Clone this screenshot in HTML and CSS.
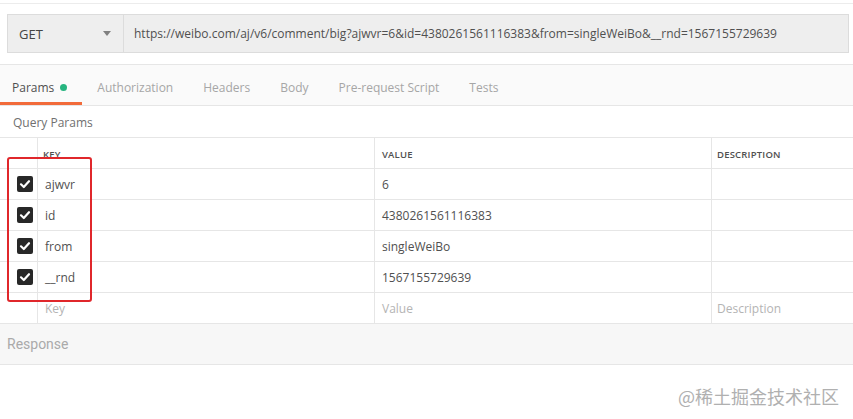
FILE: index.html
```html
<!DOCTYPE html>
<html>
<head>
<meta charset="utf-8">
<link rel="stylesheet" href="styles.css">
</head>
<body>
<div class="topline"></div>
<div class="request">
  <div class="urlbar">
    <div class="method"><span>GET</span><span class="caret"></span></div>
    <div class="url">https://weibo.com/aj/v6/comment/big?ajwvr=6&amp;id=4380261561116383&amp;from=singleWeiBo&amp;__rnd=1567155729639</div>
  </div>
</div>
<div class="tabs">
  <div class="tab active">Params<span class="dot"></span></div>
  <div class="tab">Authorization</div>
  <div class="tab">Headers</div>
  <div class="tab">Body</div>
  <div class="tab">Pre-request Script</div>
  <div class="tab">Tests</div>
</div>
<div class="section-title">Query Params</div>
<div class="table">
  <div class="row head">
    <div class="cell chk"></div>
    <div class="cell key">KEY</div>
    <div class="cell val">VALUE</div>
    <div class="cell desc">DESCRIPTION</div>
  </div>
  <div class="row">
    <div class="cell chk"><span class="box"><svg width="16" height="16" viewBox="0 0 16 16"><path d="M4 8.3 L6.8 11 L12 5.2" fill="none" stroke="#fff" stroke-width="2.2" stroke-linecap="round" stroke-linejoin="round"/></svg></span></div>
    <div class="cell key">ajwvr</div>
    <div class="cell val">6</div>
    <div class="cell desc"></div>
  </div>
  <div class="row">
    <div class="cell chk"><span class="box"><svg width="16" height="16" viewBox="0 0 16 16"><path d="M4 8.3 L6.8 11 L12 5.2" fill="none" stroke="#fff" stroke-width="2.2" stroke-linecap="round" stroke-linejoin="round"/></svg></span></div>
    <div class="cell key">id</div>
    <div class="cell val">4380261561116383</div>
    <div class="cell desc"></div>
  </div>
  <div class="row">
    <div class="cell chk"><span class="box"><svg width="16" height="16" viewBox="0 0 16 16"><path d="M4 8.3 L6.8 11 L12 5.2" fill="none" stroke="#fff" stroke-width="2.2" stroke-linecap="round" stroke-linejoin="round"/></svg></span></div>
    <div class="cell key">from</div>
    <div class="cell val">singleWeiBo</div>
    <div class="cell desc"></div>
  </div>
  <div class="row">
    <div class="cell chk"><span class="box"><svg width="16" height="16" viewBox="0 0 16 16"><path d="M4 8.3 L6.8 11 L12 5.2" fill="none" stroke="#fff" stroke-width="2.2" stroke-linecap="round" stroke-linejoin="round"/></svg></span></div>
    <div class="cell key">__rnd</div>
    <div class="cell val">1567155729639</div>
    <div class="cell desc"></div>
  </div>
  <div class="row">
    <div class="cell chk"></div>
    <div class="cell key ph">Key</div>
    <div class="cell val ph">Value</div>
    <div class="cell desc ph">Description</div>
  </div>
  <div class="highlight"></div>
</div>
<div class="response">Response</div>
<div class="watermark">@稀土掘金技术社区</div>
</body>
</html>
```
FILE: styles.css
```css
html, body {
  margin: 0;
  padding: 0;
  background: #fff;
}
body {
  width: 853px;
  height: 419px;
  overflow: hidden;
  position: relative;
  font-family: "Open Sans", "Noto Sans", sans-serif;
  color: #505050;
}
.topline {
  height: 3px;
  border-bottom: 1px solid #ececec;
}
.request {
  padding: 10px 4px 11px 7px;
  border-bottom: 1px solid #e6e6e6;
}
.urlbar {
  display: flex;
  height: 37px;
  border: 1px solid #dcdcdc;
  background: #eeeeee;
  font-size: 12px;
}
.method {
  box-sizing: border-box;
  width: 116px;
  padding-left: 11px;
  padding-right: 12px;
  border-right: 1px solid #dcdcdc;
  display: flex;
  align-items: center;
  justify-content: space-between;
  font-size: 13px;
  color: #444;
}
.caret {
  width: 0;
  height: 0;
  border-left: 4px solid transparent;
  border-right: 4px solid transparent;
  border-top: 5px solid #808080;
}
.url {
  padding-left: 10px;
  display: flex;
  align-items: center;
  color: #505050;
  white-space: nowrap;
}
.tabs {
  display: flex;
  height: 40px;
  background: #fafafa;
  border-bottom: 1px solid #e6e6e6;
  font-size: 12px;
}
.tab {
  display: flex;
  align-items: center;
  padding: 8px 15px 0;
  color: #a6a6a6;
  border-bottom: 3px solid transparent;
}
.tab.active {
  padding-left: 12px;
  color: #505050;
  border-bottom-color: #f26b3a;
}
.dot {
  width: 7px;
  height: 7px;
  border-radius: 50%;
  background: #26b47f;
  margin-left: 6px;
}
.section-title {
  height: 32px;
  padding-left: 13px;
  padding-top: 2px;
  box-sizing: border-box;
  font-size: 12px;
  color: #707070;
  display: flex;
  align-items: center;
  border-bottom: 1px solid #e6e6e6;
}
.table {
  position: relative;
}
.row {
  display: grid;
  grid-template-columns: 37px 337px 337px 1fr;
  height: 30px;
  border-bottom: 1px solid #e6e6e6;
  font-size: 12px;
}
.cell {
  display: flex;
  align-items: center;
  padding-left: 7px;
  border-left: 1px solid #e6e6e6;
}
.cell.chk {
  border-left: none;
  padding-left: 17px;
}
.cell.desc {
  padding-left: 5px;
}
.head .cell {
  font-size: 9.5px;
  font-weight: 600;
  letter-spacing: 0.2px;
  color: #505050;
  padding-top: 2px;
}
.head .cell.key {
  padding-left: 5px;
}
.box {
  width: 16px;
  height: 16px;
  border-radius: 2px;
  background: #282828;
  display: block;
}
.box svg {
  display: block;
}
.ph {
  color: #b4b4b4;
}
.highlight {
  position: absolute;
  left: 7px;
  top: 19px;
  width: 81px;
  height: 141px;
  border: 2px solid #e0272b;
  border-radius: 3px;
}
.response {
  height: 40px;
  background: #f7f7f7;
  border-bottom: 1px solid #e6e6e6;
  display: flex;
  align-items: center;
  padding-left: 7px;
  font-family: Roboto, "Noto Sans", sans-serif;
  font-size: 14px;
  color: #aaaaaa;
}
.watermark {
  position: absolute;
  left: 678px;
  top: 385px;
  font-family: "Noto Sans CJK SC", sans-serif;
  font-size: 18px;
  line-height: 22px;
  color: #b0b0b0;
}
```
